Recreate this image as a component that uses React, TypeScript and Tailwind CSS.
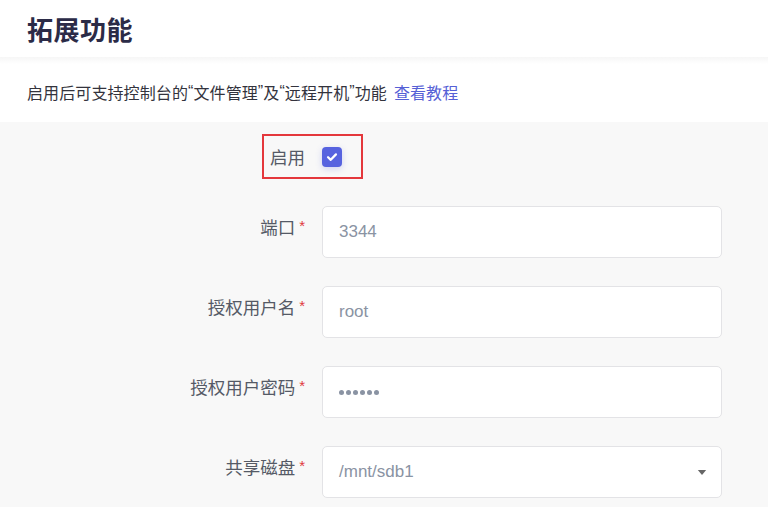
const font = { fontFamily: '"Noto Sans CJK SC", "Liberation Sans", sans-serif' };
const latin = { fontFamily: '"Liberation Sans", Arial, sans-serif' };

interface FieldProps {
  label: string;
  children: React.ReactNode;
}

function Field({ label, children }: FieldProps) {
  return (
    <div className="flex items-start">
      <div className="w-[305px] shrink-0 pt-[9px] text-right text-[17.5px] leading-6 text-[#555a66]">
        {label}
        <span className="relative -top-[3px] ml-[4px] text-[15px] text-[#e0383e]" style={latin}>
          *
        </span>
      </div>
      <div className="ml-[17px] w-[400px]">{children}</div>
    </div>
  );
}

function TextInput({ value }: { value: string }) {
  return (
    <div
      className="flex h-[52px] items-center rounded-[5px] border border-[#e3e3e6] bg-white px-4 text-[17px] text-[#8a93a3]"
      style={latin}
    >
      {value}
    </div>
  );
}

// narrow western quotes, as in the original page
function Q({ c }: { c: string }) {
  return <span style={latin}>{c}</span>;
}

export default function App() {
  return (
    <div className="min-h-[507px] w-[768px] overflow-hidden bg-[#f8f8f8]" style={font}>
      <div className="flex h-[57px] items-center bg-white px-[27px]">
        <h1 className="text-[26px] font-bold tracking-[0.5px] text-[#2b2b47]">拓展功能</h1>
      </div>
      <div className="h-[7px] bg-gradient-to-b from-[#f6f6f6] to-white" />
      <div className="flex h-[58px] items-center bg-white px-[27px] pb-[2px] text-[16px] tracking-[0.1px] text-[#33333d]">
        启用后可支持控制台的<Q c="“" />文件管理<Q c="”" />及<Q c="“" />远程开机<Q c="”" />功能
        <a className="ml-[7px] text-[#5560d6]">查看教程</a>
      </div>

      <div className="pt-[12px]">
        <div className="relative flex h-[45px] items-center">
          <div className="w-[305px] shrink-0 text-right text-[17.5px] leading-6 text-[#555a66]">启用</div>
          <div className="ml-[17px] flex h-5 w-5 items-center justify-center rounded-[4px] bg-[#5763df] shadow-[0_2px_6px_rgba(87,99,223,0.25)]">
            <svg viewBox="0 0 16 16" className="h-[14px] w-[14px]" fill="none">
              <path d="M3.5 8.3 6.6 11.2 12.5 5" stroke="white" strokeWidth="2.6" strokeLinecap="round" strokeLinejoin="round" />
            </svg>
          </div>
          <div className="absolute left-[262px] top-0 h-[45px] w-[101px] border-2 border-[#e4373c]" />
        </div>

        <div className="mt-[27px] flex flex-col gap-[28px]">
          <Field label="端口">
            <TextInput value="3344" />
          </Field>
          <Field label="授权用户名">
            <TextInput value="root" />
          </Field>
          <Field label="授权用户密码">
            <div className="flex h-[52px] items-center gap-[2px] rounded-[5px] border border-[#e3e3e6] bg-white px-4">
              {[0, 1, 2, 3, 4, 5].map((i) => (
                <span key={i} className="h-[5px] w-[5px] rounded-full bg-[#8a93a3]" />
              ))}
            </div>
          </Field>
          <Field label="共享磁盘">
            <div
              className="flex h-[52px] items-center justify-between rounded-[5px] border border-[#e3e3e6] bg-white pl-4 pr-[14px] text-[17px] text-[#8a93a3]"
              style={latin}
            >
              /mnt/sdb1
              <svg viewBox="0 0 10 6" className="h-[5px] w-[10px]">
                <path d="M0 0h10L5 6z" fill="#666" />
              </svg>
            </div>
          </Field>
        </div>
      </div>
    </div>
  );
}
